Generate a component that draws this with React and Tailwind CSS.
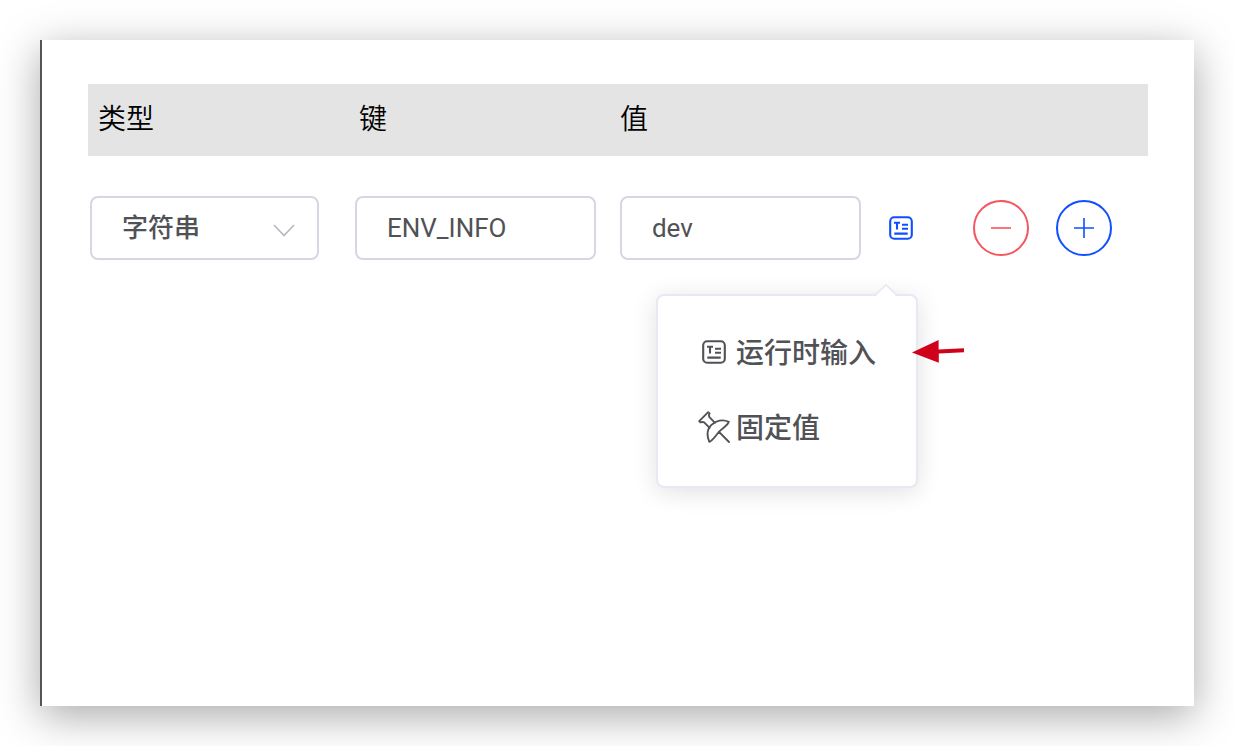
import React, { useState } from "react";

function TextInputIcon() {
  return (
    <svg className="size-6" viewBox="0 0 24 24" fill="none" stroke="currentColor" strokeWidth="2.1" aria-hidden="true">
      <rect x="1.2" y="1.2" width="21.6" height="21.6" rx="4" />
      <path d="M5 6.7h6M8 6.7v6.8M13 8.7h6M13 12.7h6M5.3 17.6h13.4" />
    </svg>
  );
}

function PinIcon() {
  return (
    <svg className="size-8" viewBox="0 0 32 32" fill="none" stroke="currentColor" strokeWidth="1.9" strokeLinejoin="round" strokeLinecap="round" aria-hidden="true">
      <path d="M1.2 10.2L10.2 1.2L11.6 2.4C10.8 3.6 10.8 5 11.4 6.2L17 11.8M1.2 10.2L2.4 11.4C3.8 10.8 5 10.8 6.2 11.4L11.6 16.8" />
      <path d="M11.4 30.8C8.6 24.6 9 18.6 13.2 14.2C17.8 9.4 24.8 8 30.8 10.8C30 14 26.4 15.8 22.2 19.6C17.6 24.2 14.8 29.8 11.4 30.8ZM21 20.8L31 31" />
    </svg>
  );
}

function CircleButton({ label, color, path }) {
  return (
    <button type="button" aria-label={label} className={`flex size-14 shrink-0 items-center justify-center rounded-full border-2 ${color}`}>
      <svg className="size-5" viewBox="0 0 20 20" fill="none" stroke="currentColor" strokeWidth="1.6" aria-hidden="true">
        <path d={path} />
      </svg>
    </button>
  );
}

const field =
  "h-16 w-full rounded-lg border-2 border-[#d5d7e3] bg-white px-[30px] text-[26px] text-[#505256] outline-none";
const menuItem = "flex h-[75px] w-full items-center gap-1.5 pl-10 text-left text-[28px] font-medium text-[#505256]";
const heading = "pl-2.5 font-[350]";

export default function App() {
  const [key, setKey] = useState("ENV_INFO");
  const [value, setValue] = useState("dev");

  return (
    <div className="flex min-h-screen bg-white p-10 font-[Roboto,'Noto_Sans_CJK_SC',sans-serif]">
      <main className="min-w-0 flex-1 border-l-2 border-[#555555] bg-white px-[46px] pt-11 shadow-[0_10px_40px_rgba(0,0,0,0.34)]">
        <table className="w-full table-fixed border-collapse text-left">
          <colgroup>
            <col className="w-[24.62%]" />
            <col className="w-[24.62%]" />
            <col className="w-[24.62%]" />
            <col />
          </colgroup>
          <thead>
            <tr className="h-[72px] bg-[#e4e4e4] text-[28px] leading-10 text-black">
              <th scope="col" className={heading}>类型</th>
              <th scope="col" className={heading}>键</th>
              <th scope="col" className={heading}>值</th>
              <td />
            </tr>
          </thead>
          <tbody>
            <tr>
              <td className="pt-10 pr-[30px] pl-0.5">
                <div className="relative">
                  <select aria-label="类型" className={`${field} block appearance-none font-medium`}>
                    <option>字符串</option>
                  </select>
                  <svg className="pointer-events-none absolute top-7 right-6 h-3.5 w-[22px]" viewBox="0 0 22 14" fill="none" stroke="#b4b8c2" strokeWidth="1.6" aria-hidden="true">
                    <path d="M1 1l10 10.5L21 1" />
                  </svg>
                </div>
              </td>
              <td className="pt-10 pr-3.5 pl-1.5">
                <input aria-label="键" className={`${field} block`} value={key} onChange={(e) => setKey(e.target.value)} />
              </td>
              <td className="px-2.5 pt-10">
                <input aria-label="值" className={`${field} block`} value={value} onChange={(e) => setValue(e.target.value)} />
              </td>
              <td className="pt-10 pl-[18px]">
                <div className="flex items-center">
                  <div className="relative mr-[60px] size-6 shrink-0">
                    <button type="button" aria-label="输入方式" aria-haspopup="menu" aria-expanded="true" className="block text-[#0f4fff]">
                      <TextInputIcon />
                    </button>
                    <div role="menu" className="absolute top-[78px] -right-[5px] w-[262px] rounded-lg border-2 border-[#e6e8f3] bg-white py-5 shadow-[0_4px_24px_rgba(0,0,0,0.12)]">
                      <svg className="absolute -top-3 right-[18px] h-3 w-6" viewBox="0 0 24 12" aria-hidden="true">
                        <path d="M2 12L12 2L22 12Z" fill="white" />
                        <path d="M1 11L12 1L23 11" fill="none" stroke="#e6e8f3" strokeWidth="1.6" />
                      </svg>
                      <button type="button" role="menuitem" className={menuItem}>
                        <span className="flex w-8 justify-center pb-1"><TextInputIcon /></span>
                        运行时输入
                      </button>
                      <button type="button" role="menuitem" className={menuItem}>
                        <span className="pb-1"><PinIcon /></span>
                        固定值
                      </button>
                      <svg className="absolute top-11 -right-12 h-6 w-[52px]" viewBox="0 0 52 24" fill="#d0021b" aria-hidden="true">
                        <path d="M0 12.6L26.6 0V9.4L52 8.2V12.2L26.8 13.4V22.8Z" />
                      </svg>
                    </div>
                  </div>
                  <div className="flex gap-[27px]">
                    <CircleButton label="删除" color="border-[#f5555d] text-[#f5555d]" path="M0 10h20" />
                    <CircleButton label="添加" color="border-[#0f4fff] text-[#0f4fff]" path="M0 10h20M10 0v20" />
                  </div>
                </div>
              </td>
            </tr>
          </tbody>
        </table>
      </main>
    </div>
  );
}
